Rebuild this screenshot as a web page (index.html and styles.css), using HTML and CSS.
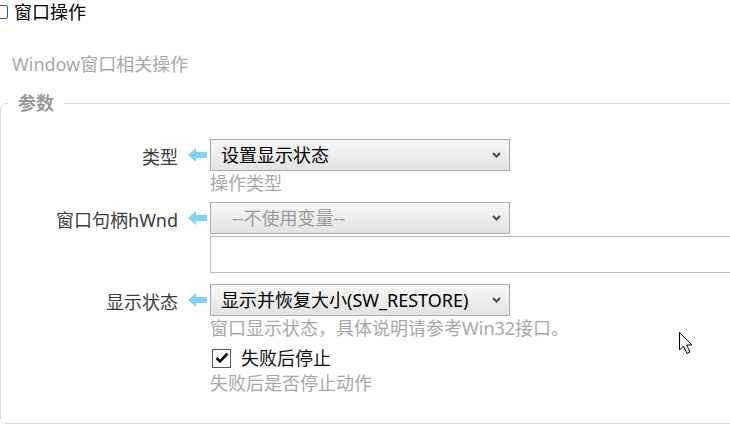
FILE: index.html
```html
<!DOCTYPE html>
<html lang="zh-CN">
<head>
    <meta charset="UTF-8">
    <title>窗口操作</title>
    <link rel="stylesheet" href="styles.css">
</head>
<body>
    <div class="page">
        <div class="header">
            <span class="head-box"></span>
            <span class="head-title">窗口操作</span>
        </div>
        <p class="desc">Window窗口相关操作</p>

        <fieldset class="params">
            <legend>参数</legend>

            <div class="field">
                <label class="field-label">类型</label>
                <svg class="link-arrow" width="19" height="14" viewBox="0 0 19 14"><path d="M0 7 L8 0 L8 4 L19 4 L19 10 L8 10 L8 14 Z" fill="#7fd3f7"/></svg>
                <div class="select-wrap">
                    <select class="select"><option>设置显示状态</option></select>
                    <svg class="chevron" width="9" height="6" viewBox="0 0 9 6"><path d="M1 1 L4.5 4.5 L8 1" fill="none" stroke="#4a4a4a" stroke-width="2"/></svg>
                </div>
                <div class="help">操作类型</div>
            </div>

            <div class="field field-hwnd">
                <label class="field-label">窗口句柄hWnd</label>
                <svg class="link-arrow" width="19" height="14" viewBox="0 0 19 14"><path d="M0 7 L8 0 L8 4 L19 4 L19 10 L8 10 L8 14 Z" fill="#7fd3f7"/></svg>
                <div class="select-wrap">
                    <select class="select select-empty"><option>--不使用变量--</option></select>
                    <svg class="chevron" width="9" height="6" viewBox="0 0 9 6"><path d="M1 1 L4.5 4.5 L8 1" fill="none" stroke="#4a4a4a" stroke-width="2"/></svg>
                </div>
                <input class="textbox" type="text">
            </div>

            <div class="field field-show">
                <label class="field-label">显示状态</label>
                <svg class="link-arrow" width="19" height="14" viewBox="0 0 19 14"><path d="M0 7 L8 0 L8 4 L19 4 L19 10 L8 10 L8 14 Z" fill="#7fd3f7"/></svg>
                <div class="select-wrap">
                    <select class="select"><option>显示并恢复大小(SW_RESTORE)</option></select>
                    <svg class="chevron" width="9" height="6" viewBox="0 0 9 6"><path d="M1 1 L4.5 4.5 L8 1" fill="none" stroke="#4a4a4a" stroke-width="2"/></svg>
                </div>
                <div class="help">窗口显示状态，具体说明请参考Win32接口。</div>
            </div>

            <div class="field field-check">
                <label class="check">
                    <span class="check-box">
                        <svg width="14" height="12" viewBox="0 0 14 12"><path d="M1.5 6 L5 9.5 L12.5 1.5" fill="none" stroke="#111" stroke-width="2.6"/></svg>
                    </span>
                    失败后停止
                </label>
                <div class="help">失败后是否停止动作</div>
            </div>
        </fieldset>
    </div>

    <svg class="cursor" width="14" height="24" viewBox="0 0 14 24"><path d="M0.5 0.5 L0.5 18 L4.5 14 L8 21.5 L11 20 L7.5 13 L13 13 Z" fill="#fff" stroke="#000" stroke-width="1"/></svg>
</body>
</html>
```

FILE: styles.css
```css
body {
    margin: 0;
    overflow: hidden;
    font-family: "Noto Sans", "Noto Sans CJK SC", sans-serif;
    font-size: 18px;
    color: #222;
    background: #fff;
}

.page {
    width: 790px;
}

.header {
    display: flex;
    align-items: center;
    height: 24px;
}

.head-box {
    width: 12px;
    height: 12px;
    margin-left: -6px;
    border: 1px solid #2f5b8f;
    border-radius: 2px;
}

.head-title {
    margin-left: 6px;
    color: #000;
    line-height: 24px;
}

.desc {
    margin: 28px 0 0 12px;
    line-height: 24px;
    color: #a8a8a8;
}

.params {
    margin: 16px 0 0 0;
    padding: 25px 0 29px 0;
    border: 1px solid #d6dce2;
    border-radius: 6px;
}

.params legend {
    margin-left: 7px;
    padding: 0 10px;
    font-weight: bold;
    line-height: 22px;
    color: #9a9a9a;
}

.field {
    display: grid;
    grid-template-columns: 177px 32px 1fr;
    align-items: center;
}

.field-hwnd {
    margin-top: 8px;
}

.field-show {
    margin-top: 11px;
}

.field-label {
    grid-column: 1;
    text-align: right;
    color: #3c3c3c;
    line-height: 28px;
    padding-top: 4px;
}

.link-arrow {
    grid-column: 2;
    justify-self: end;
    margin-right: 3px;
}

.select-wrap {
    grid-column: 3;
    position: relative;
    width: 300px;
}

.select {
    display: block;
    width: 300px;
    height: 32px;
    margin: 0;
    padding: 0 0 0 10px;
    appearance: none;
    border: 1px solid #adadad;
    border-radius: 0;
    background: linear-gradient(#f7f7f7, #e3e3e3);
    font-family: inherit;
    font-size: 18px;
    color: #000;
}

.select-empty {
    padding-left: 21px;
    color: #9a9a9a;
}

.chevron {
    position: absolute;
    right: 9px;
    top: 13px;
}

.help {
    grid-column: 3;
    line-height: 22px;
    margin-top: 1px;
    color: #a8a8a8;
}

.textbox {
    grid-column: 3;
    margin-top: 2px;
    height: 37px;
    box-sizing: border-box;
    border: 1px solid #bdbdbd;
    padding: 0 8px;
    font-size: 18px;
}

.field-check {
    margin-top: 9px;
}

.check {
    grid-column: 3;
    display: flex;
    align-items: center;
    gap: 10px;
    line-height: 20px;
    color: #111;
}

.field-check .help {
    margin-top: 4px;
}

.check-box {
    display: flex;
    align-items: center;
    justify-content: center;
    width: 17px;
    height: 17px;
    margin-left: 2px;
    border: 1px solid #555;
    background: #fff;
}

.cursor {
    position: absolute;
    left: 679px;
    top: 332px;
}
```
